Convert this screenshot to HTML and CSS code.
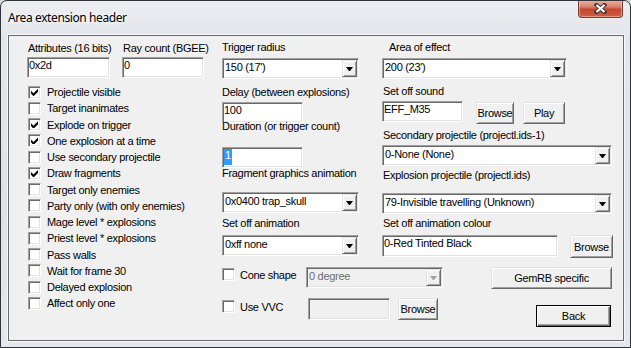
FILE: index.html
```html
<!DOCTYPE html>
<html lang="en">
<head>
    <meta charset="UTF-8">
    <meta name="viewport" content="width=device-width, initial-scale=1.0">
    <title>Area extension header</title>
    <link rel="stylesheet" href="styles.css">
</head>
<body>
<div class="window">
    <div class="titlebar">
        <span class="title">Area extension header</span>
        <div class="close">
            <svg width="13" height="11" viewBox="0 0 13 11">
                <path d="M2.5 2 L10.5 9 M10.5 2 L2.5 9" stroke="#3a3a3a" stroke-width="4.2" stroke-linecap="square"/>
                <path d="M2.5 2 L10.5 9 M10.5 2 L2.5 9" stroke="#fff" stroke-width="2.2"/>
            </svg>
        </div>
    </div>

    <div class="client">
        <!-- left: attributes + flags -->
        <div class="col-left">
            <div class="top-fields">
                <div class="field w83">
                    <div class="lbl ind1">Attributes (16 bits)</div>
                    <div class="edit w83 mt2">0x2d</div>
                </div>
                <div class="field w82">
                    <div class="lbl ind1">Ray count (BGEE)</div>
                    <div class="edit w82 mt2">0</div>
                </div>
            </div>
            <ul class="checks">
                <li><span class="cb on"></span>Projectile visible</li>
                <li><span class="cb"></span>Target inanimates</li>
                <li><span class="cb on"></span>Explode on trigger</li>
                <li><span class="cb on"></span>One explosion at a time</li>
                <li><span class="cb"></span>Use secondary projectile</li>
                <li><span class="cb on"></span>Draw fragments</li>
                <li><span class="cb"></span>Target only enemies</li>
                <li><span class="cb"></span>Party only (with only enemies)</li>
                <li><span class="cb"></span>Mage level * explosions</li>
                <li><span class="cb"></span>Priest level * explosions</li>
                <li><span class="cb"></span>Pass walls</li>
                <li><span class="cb"></span>Wait for frame 30</li>
                <li><span class="cb"></span>Delayed explosion</li>
                <li><span class="cb"></span>Affect only one</li>
            </ul>
        </div>

        <div class="col-main">
            <div class="cols">
                <!-- middle column -->
                <div class="col-mid">
                    <div class="lbl mt5">Trigger radius</div>
                    <div class="combo w137 mt4"><span class="val">150 (17')</span><span class="drop"></span></div>
                    <div class="lbl mt7">Delay (between explosions)</div>
                    <div class="edit w81 mt3">100</div>
                    <div class="lbl mtn3">Duration (or trigger count)</div>
                    <div class="edit dur w81 mt14"><span class="sel">1</span></div>
                    <div class="lbl mtn1">Fragment graphics animation</div>
                    <div class="combo w137 mt12"><span class="val">0x0400 trap_skull</span><span class="drop"></span></div>
                    <div class="lbl mt4">Set off animation</div>
                    <div class="combo w137 mt5"><span class="val">0xff none</span><span class="drop"></span></div>
                </div>

                <!-- right column -->
                <div class="col-right">
                    <div class="lbl ind7 mt5">Area of effect</div>
                    <div class="combo w185 mt4"><span class="val">200 (23')</span><span class="drop"></span></div>
                    <div class="lbl ind1 mt6">Set off sound</div>
                    <div class="snd-row">
                        <div class="edit w81">EFF_M35</div>
                        <div class="btn w38 browse-snd">Browse</div>
                        <div class="btn w42 play">Play</div>
                    </div>
                    <div class="lbl ind1 mt5">Secondary projectile (projectl.ids-1)</div>
                    <div class="combo w230 mt3"><span class="val">0-None (None)</span><span class="drop"></span></div>
                    <div class="lbl ind1 mt3">Explosion projectile (projectl.ids)</div>
                    <div class="combo w230 mt11"><span class="val">79-Invisible travelling (Unknown)</span><span class="drop"></span></div>
                    <div class="lbl ind1 mt3">Set off animation colour</div>
                    <div class="col-row">
                        <div class="edit tall w176">0-Red Tinted Black</div>
                        <div class="btn w43 browse-col">Browse</div>
                    </div>
                </div>
            </div>

            <div class="row-cone">
                <div class="chk-group cone"><span class="cb"></span>Cone shape</div>
                <div class="combo disabled w137"><span class="val">0 degree</span><span class="drop"></span></div>
                <div class="btn gemrb">GemRB specific</div>
            </div>
            <div class="row-vvc">
                <div class="chk-group vvc"><span class="cb"></span>Use VVC</div>
                <div class="edit disabled tall w82"></div>
                <div class="btn w40 browse-vvc">Browse</div>
                <div class="btn default back">Back</div>
            </div>
        </div>
    </div>
</div>
</body>
</html>
```

FILE: styles.css
```css
/* base */
* {box-sizing: border-box;}
body {margin: 0; background: #d3d8de; font-family: "Liberation Sans", Arial, sans-serif; font-size: 11px; letter-spacing: -0.3px; color: #000;}

/* window frame (aero glass, no blur here) */
.window {width: 631px; height: 348px; border: 1px solid #30343a; border-radius: 7px 7px 0 0; padding: 0 6px 6px 7px;
    display: flex; flex-direction: column; overflow: hidden;
    background: linear-gradient(180deg, #eceef1 0%, #e3e6ea 10%, #dfe3e8 60%, #e4e7eb 100%);}
.titlebar {height: 34px; display: flex; align-items: flex-start;}
.title {font-family: "Noto Sans", "Open Sans", sans-serif; font-size: 12px; line-height: 16px; letter-spacing: -0.4px; margin-top: 9px;
    text-shadow: 0 0 4px #fff, 0 0 8px #fff;}
.close {margin-left: auto; margin-right: 1px; margin-top: -1px; width: 45px; height: 18px; display: flex; align-items: center; justify-content: center;
    border: 1px solid #7b3a30; border-top: none; border-radius: 0 0 4px 4px;
    background: linear-gradient(180deg, #eab2a4 0%, #d9826e 40%, #c5472f 55%, #cf5e44 100%);
    box-shadow: inset 0 0 0 1px rgba(255, 220, 210, .45), 0 0 2px rgba(255, 255, 255, .8);}

/* client area */
.client {height: 306px; display: flex; border: 1px solid #666a70; background: #f0f0f0; box-shadow: 0 0 0 1px rgba(255, 255, 255, .7);}
.col-left {width: 213px; padding-left: 18px;}
.col-main {width: 400px; display: flex; flex-direction: column;}
.cols {display: flex; align-items: flex-start;}
.col-mid {width: 160px; display: flex; flex-direction: column; align-items: flex-start;}
.col-right {width: 231px; display: flex; flex-direction: column; align-items: flex-start;}

/* labels */
.lbl {height: 13px; line-height: 13px; white-space: nowrap;}
.ind1 {padding-left: 1px;}
.ind7 {padding-left: 7px;}

/* spacing */
.mt2 {margin-top: 2px;}
.mt3 {margin-top: 3px;}
.mt4 {margin-top: 4px;}
.mt5 {margin-top: 5px;}
.mt6 {margin-top: 6px;}
.mt7 {margin-top: 7px;}
.mt11 {margin-top: 11px;}
.mt12 {margin-top: 12px;}
.mt14 {margin-top: 14px;}
.mtn1 {margin-top: -1px;}
.mtn3 {margin-top: -3px;}

/* widths */
.w38 {width: 38px;}
.w40 {width: 40px;}
.w42 {width: 42px;}
.w43 {width: 43px;}
.w81 {width: 81px;}
.w82 {width: 82px;}
.w83 {width: 83px;}
.w137 {width: 137px;}
.w176 {width: 176px;}
.w185 {width: 185px;}
.w230 {width: 230px;}

/* sunken edit box */
.edit {height: 21px; background: #fff; padding: 1px 0 0 1px; line-height: 13px; white-space: nowrap; overflow: hidden;
    border: 1px solid; border-color: #a0a0a0 #fff #fff #a0a0a0; box-shadow: inset 1px 1px 0 #696969, inset -1px -1px 0 #e3e3e3;}
.edit.tall {height: 22px;}
.edit.disabled {background: #f0f0f0;}
.edit.dur {padding-left: 1px;}
.sel {display: inline-block; vertical-align: top; height: 16px; line-height: 13px; padding: 0 1px; background: #3399ff; color: #fff;}

/* combo box */
.combo {height: 21px; display: flex; background: #fff; border: 1px solid; border-color: #a0a0a0 #fff #fff #a0a0a0;
    box-shadow: inset 1px 1px 0 #696969, inset -1px -1px 0 #e3e3e3; padding: 1px 1px 1px 1px;}
.combo .val {flex: 1; padding: 1px 0 0 1px; line-height: 13px; white-space: nowrap; overflow: hidden;}
.combo .drop {width: 15px; height: 17px; background: #f0f0f0; display: flex; align-items: center; justify-content: center; padding-top: 1px;
    border: 1px solid; border-color: #e3e3e3 #696969 #696969 #e3e3e3; box-shadow: inset 1px 1px 0 #fff, inset -1px -1px 0 #a0a0a0;}
.combo .drop::after {content: ""; width: 7px; height: 4px; background: #000; clip-path: polygon(0 0, 100% 0, 57% 100%, 43% 100%);}
.combo.disabled {background: #f0f0f0; color: #6d6d6d;}
.combo.disabled .drop::after {background: #a0a0a0;}

/* raised push button */
.btn {height: 22px; display: flex; align-items: center; justify-content: center; background: #f0f0f0; white-space: nowrap;
    border: 1px solid; border-color: #e3e3e3 #696969 #696969 #e3e3e3; box-shadow: inset 1px 1px 0 #fff, inset -1px -1px 0 #a0a0a0;}
.btn.default {border-color: #000; box-shadow: inset 1px 1px 0 #fff, inset -1px -1px 0 #696969, inset -2px -2px 0 #a0a0a0;}

/* checkbox */
.cb {flex: none; width: 13px; height: 13px; background: #fff; display: flex; align-items: center; justify-content: center;
    border: 1px solid; border-color: #a0a0a0 #fff #fff #a0a0a0; box-shadow: inset 1px 1px 0 #696969, inset -1px -1px 0 #e3e3e3;}
.cb.on::after {content: ""; width: 7px; height: 7px; background: #000;
    clip-path: polygon(0 28.6%, 35.7% 64.3%, 100% 0, 100% 42.9%, 42.9% 100%, 28.6% 100%, 0 71.4%);}

/* left column */
.top-fields {display: flex; gap: 12px; margin-top: 6px;}
.field {display: flex; flex-direction: column;}
.checks {list-style: none; margin: 6px 0 0; padding: 0 0 0 1px;}
.checks li {height: 16.25px; line-height: 16.25px; display: flex; align-items: center; gap: 6px; white-space: nowrap;}

/* right column rows */
.snd-row {display: flex; align-items: flex-start; margin-top: 3px; height: 23px;}
.snd-row .browse-snd {margin: 1px 0 0 13px;}
.snd-row .play {margin: 1px 0 0 9px;}
.col-row {display: flex; align-items: flex-start; margin-top: 5px; height: 23px;}
.col-row .browse-col {margin-left: 12px; height: 23px;}

/* bottom rows */
.row-cone {display: flex; align-items: flex-start; margin-top: 9px; height: 22px;}
.row-vvc {display: flex; align-items: flex-start; margin-top: 9px;}
.chk-group {display: flex; align-items: center; gap: 5px; white-space: nowrap;}
.chk-group.cone {width: 84px; height: 15px;}
.chk-group.vvc {width: 86px; height: 17px;}
.gemrb {width: 121px; margin-left: auto; margin-right: 10px;}
.browse-vvc {margin-left: 8px;}
.back {width: 75px; margin-left: auto; margin-right: 11px; margin-top: 7px;}
```
